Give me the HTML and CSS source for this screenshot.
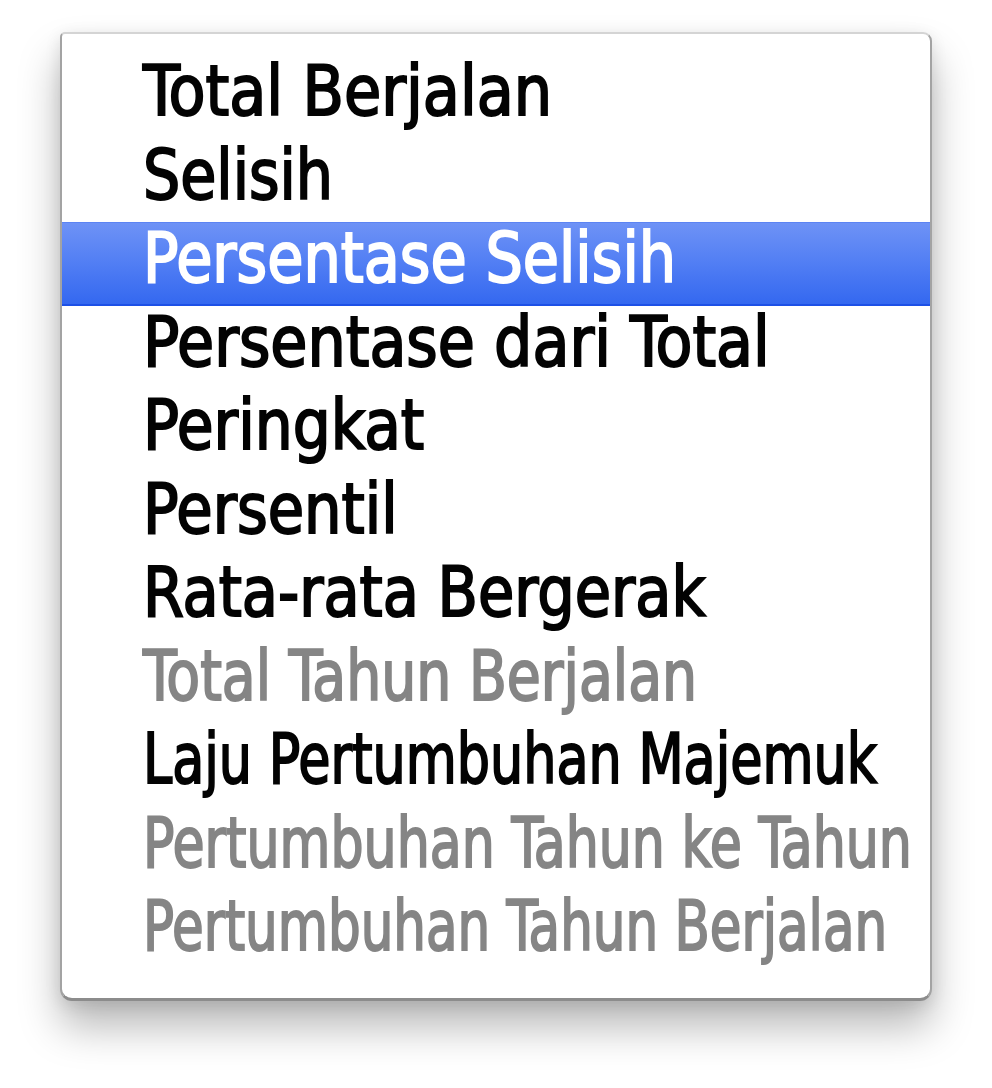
FILE: index.html
```html
<!DOCTYPE html>
<html lang="id">
<head>
<meta charset="utf-8">
<title>Menu</title>
<link rel="stylesheet" href="styles.css">
</head>
<body>
<div class="menu">
  <div class="item"><span class="label" style="--sx:0.975">Total Berjalan</span></div>
  <div class="item"><span class="label" style="--sx:0.945">Selisih</span></div>
  <div class="item selected"><span class="label" style="--sx:0.948">Persentase Selisih</span></div>
  <div class="item"><span class="label" style="--sx:0.972">Persentase dari Total</span></div>
  <div class="item"><span class="label" style="--sx:0.964">Peringkat</span></div>
  <div class="item"><span class="label" style="--sx:0.952">Persentil</span></div>
  <div class="item"><span class="label" style="--sx:0.95">Rata-rata Bergerak</span></div>
  <div class="item disabled"><span class="label" style="--sx:0.891">Total Tahun Berjalan</span></div>
  <div class="item"><span class="label" style="--sx:0.844">Laju Pertumbuhan Majemuk</span></div>
  <div class="item disabled"><span class="label" style="--sx:0.841">Pertumbuhan Tahun ke Tahun</span></div>
  <div class="item disabled"><span class="label" style="--sx:0.83">Pertumbuhan Tahun Berjalan</span></div>
</div>
</body>
</html>
```
FILE: styles.css
```css
html, body {
  margin: 0;
  padding: 0;
  background: #ffffff;
}

body {
  box-sizing: border-box;
  min-height: 1088px;
  padding: 32px 0 0 60px;
}

.menu {
  box-sizing: border-box;
  width: 872px;
  height: 969px;
  background: #ffffff;
  border: 2px solid #a3a3a3;
  border-top-color: #d4d4d4;
  border-bottom: 3px solid #8c8c8c;
  border-radius: 5px 9px 12px 12px;
  box-shadow: 0 26px 42px rgba(0, 0, 0, 0.28), 0 4px 16px rgba(0, 0, 0, 0.10);
  padding-top: 21px;
  font-family: "DejaVu Sans Condensed", "DejaVu Sans", sans-serif;
  font-stretch: condensed;
  overflow: hidden;
}

.item {
  box-sizing: border-box;
  height: 83.5px;
  padding-left: 81px;
  font-size: 69px;
  line-height: 72px;
  color: #030303;
  white-space: nowrap;
}

.label {
  display: inline-block;
  transform: scaleX(var(--sx, 0.9));
  transform-origin: 0 50%;
  -webkit-text-stroke: 1.9px currentColor;
}

.item.selected {
  color: #ffffff;
  background: linear-gradient(#6e92f6, #5480f4 45%, #3468f0);
  border-top: 1px solid #5c84f3;
  border-bottom: 2px solid #1d50e6;
  line-height: 71px;
}

.item.disabled {
  color: #858585;
}
```
